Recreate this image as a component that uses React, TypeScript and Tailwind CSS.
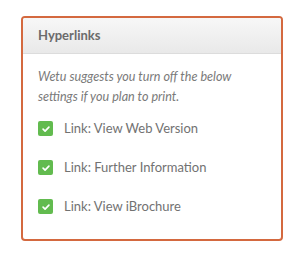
import React from 'react';

const links = ['Link: View Web Version', 'Link: Further Information', 'Link: View iBrochure'];

const Check = () => (
  <span className="flex h-[15px] w-[15px] shrink-0 items-center justify-center rounded-[2px] bg-[#62bb4f]">
    <svg viewBox="0 0 12 12" className="h-[10px] w-[10px]" fill="none" stroke="white" strokeWidth="2" strokeLinecap="round" strokeLinejoin="round">
      <path d="M2.5 6.2l2.4 2.4L9.5 3.8" />
    </svg>
  </span>
);

export default function App() {
  return (
    <div className="h-[253px] w-[296px] bg-white pl-[21px] pt-[16px]" style={{ fontFamily: 'Lato, "Open Sans", sans-serif' }}>
      <div className="h-[225px] w-[262px] overflow-hidden rounded-[4px] border-2 border-[#d4693f] bg-white">
        <div className="flex h-[36px] items-center border-b border-[#dcdcdc] bg-gradient-to-b from-[#f7f7f7] to-[#e9e9e9] pl-[15px] text-[13px] font-bold text-[#6b6b6b]">
          Hyperlinks
        </div>
        <div className="px-[15px] pt-[13px]">
          <p className="text-[12.6px] italic leading-[20px] text-[#7a7a7a]">
            Wetu suggests you turn off the below settings if you plan to print.
          </p>
          <div className="mt-[14px] flex flex-col gap-[24px]">
            {links.map((l) => (
              <div key={l} className="flex items-center gap-[11px] text-[13px] leading-[15px] text-[#727272]">
                <Check />
                <span>{l}</span>
              </div>
            ))}
          </div>
        </div>
      </div>
    </div>
  );
}
